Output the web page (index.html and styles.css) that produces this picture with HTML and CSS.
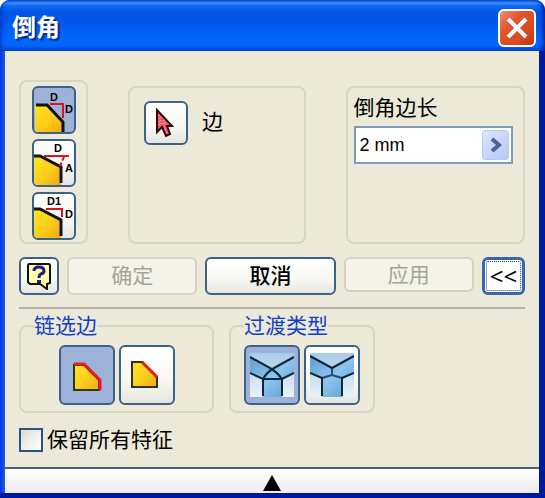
FILE: index.html
```html
<!DOCTYPE html>
<html lang="zh-CN">
<head>
    <meta charset="UTF-8">
    <meta name="viewport" content="width=device-width, initial-scale=1.0">
    <title>倒角</title>
    <link rel="stylesheet" href="styles.css">
</head>
<body>
    <div class="dialog">
        <div class="dialog-title">
            <h1>倒角</h1>
            <button class="close-button" type="button" aria-label="关闭">
                <svg width="22" height="22" viewBox="0 0 22 22"><path d="M2 2L20 20M20 2L2 20" stroke="#fff" stroke-width="4"/></svg>
            </button>
        </div>

        <form class="dialog-body">
            <div class="top-row">
                <!-- Chamfer mode -->
                <div class="group mode-group">
                    <button class="tool-button mode-button active" type="button" aria-label="距离">
                        <svg width="40" height="44" viewBox="0 0 40 44">
                            <path d="M1 17H13L29 33V44H1Z" fill="url(#gold)"/>
                            <path d="M2 17H13L29 34V44" fill="none" stroke="#111" stroke-width="3"/>
                            <path d="M16 16H29V30" fill="none" stroke="#e01020" stroke-width="2"/>
                            <text x="16" y="13">D</text>
                            <text x="31" y="25">D</text>
                        </svg>
                    </button>
                    <button class="tool-button mode-button" type="button" aria-label="距离和角度">
                        <svg width="40" height="44" viewBox="0 0 40 44">
                            <path d="M0 15H6L27 26V44H0Z" fill="url(#gold)"/>
                            <path d="M0 15H6L27 26V42" fill="none" stroke="#111" stroke-width="3"/>
                            <path d="M10 15H35" stroke="#e01020" stroke-width="2"/>
                            <path d="M30 16L26 25" stroke="#e01020" stroke-width="2" stroke-dasharray="4 2"/>
                            <text x="20" y="11">D</text>
                            <text x="31" y="31">A</text>
                        </svg>
                    </button>
                    <button class="tool-button mode-button" type="button" aria-label="两个距离">
                        <svg width="40" height="44" viewBox="0 0 40 44">
                            <path d="M0 15H6L27 26V44H0Z" fill="url(#gold)"/>
                            <path d="M0 15H6L27 26V42" fill="none" stroke="#111" stroke-width="3"/>
                            <path d="M12 15H28V23" fill="none" stroke="#e01020" stroke-width="2"/>
                            <text x="13" y="11">D1</text>
                            <text x="31" y="24">D</text>
                        </svg>
                    </button>
                </div>

                <div class="group edge-group">
                    <button class="tool-button pick-button" type="button" id="pick-edge" aria-labelledby="edge-label">
                        <svg width="28" height="30" viewBox="0 0 28 30">
                            <path d="M5 2V24L10 19L14 28L18 26L15 18H20Z" fill="#ef5a64" stroke="#2c0a0c" stroke-width="2"/>
                            <path d="M7 7V18M9 9V17M12 12V17M14 14V16M13 21L15 25" stroke="#fbb" stroke-width="1" stroke-dasharray="1 2"/>
                        </svg>
                    </button>
                    <span id="edge-label">边</span>
                </div>

                <div class="group size-group">
                    <label for="distance">倒角边长</label>
                    <div class="value-box">
                        <input type="text" id="distance" value="2 mm">
                        <button class="value-more" type="button" aria-label="更多">
                            <svg width="12" height="16" viewBox="0 0 12 16"><path d="M2 2L9 8L2 14" fill="none" stroke="#49639c" stroke-width="4"/></svg>
                        </button>
                    </div>
                </div>
            </div>

            <div class="action-row">
                <button class="push-button help-button" type="button" aria-label="帮助">
                    <svg width="26" height="28" viewBox="0 0 26 28">
                        <path d="M3 2H23L24 3V21L21 22V27L14 22H4L2 20V3Z" fill="#ffffb0" stroke="#111" stroke-width="2"/>
                        <path d="M8 9Q8 5 13 5Q18 5 18 9Q18 11 15 12Q13 13 13 16" fill="none" stroke="#20207c" stroke-width="3"/>
                        <path d="M11 18H15V21H11Z" fill="#20207c"/>
                    </svg>
                </button>
                <button class="push-button wide" type="button" disabled>确定</button>
                <button class="push-button wide cancel-button" type="button">取消</button>
                <button class="push-button wide apply-button" type="button" disabled>应用</button>
                <button class="push-button less-button" type="button">&lt;&lt;</button>
            </div>

            <hr>

            <div class="option-row">
                <fieldset class="chain-group">
                    <legend>链选边</legend>
                    <div class="option-buttons">
                        <button class="tool-button option-button active" type="button" aria-label="所有相切连接边">
                            <svg width="42" height="42" viewBox="0 0 42 42">
                                <path d="M8 11H18L33 26V36H8Z" fill="url(#gold)" stroke="#33330a" stroke-width="2"/>
                                <path d="M8 10H18L34 26V36" fill="none" stroke="#e81c24" stroke-width="3"/>
                            </svg>
                        </button>
                        <button class="tool-button option-button" type="button" aria-label="单边">
                            <svg width="42" height="42" viewBox="0 0 42 42">
                                <path d="M6 8H16L31 23V33H6Z" fill="url(#gold)" stroke="#33330a" stroke-width="2"/>
                                <path d="M16 8L31 23" stroke="#e81c24" stroke-width="3"/>
                            </svg>
                        </button>
                    </div>
                </fieldset>
                <fieldset class="setback-group">
                    <legend>过渡类型</legend>
                    <div class="option-buttons">
                        <button class="tool-button option-button active" type="button" aria-label="过渡">
                            <svg width="44" height="44" viewBox="0 0 44 44">
                                <path d="M0 0H44V44H0Z" fill="url(#ice)"/>
                                <path d="M0 4L22 16L44 4V20L32 26V44H13V26L0 20Z" fill="url(#sky)"/>
                                <path d="M0 4L20 15Q27 19 32 26L44 20M44 4L24 15Q17 19 13 26L0 20M12 26H33M13 26V43M32 26V43" fill="none" stroke="#102638" stroke-width="2"/>
                            </svg>
                        </button>
                        <button class="tool-button option-button" type="button" aria-label="无过渡">
                            <svg width="44" height="44" viewBox="0 0 44 44">
                                <path d="M0 0H44V44H0Z" fill="url(#ice)"/>
                                <path d="M0 3L22 15L44 3V20L32 25V44H12V25L0 20Z" fill="url(#sky)"/>
                                <path d="M22 15V22L12 25M22 22L32 25" fill="none" stroke="#28506e" stroke-width="2"/>
                                <path d="M0 3L22 15L44 3M0 20L12 25V43M44 20L32 25V43" fill="none" stroke="#102638" stroke-width="2"/>
                            </svg>
                        </button>
                    </div>
                </fieldset>
            </div>

            <div class="keep-row">
                <input type="checkbox" id="keep-features">
                <label for="keep-features">保留所有特征</label>
            </div>
        </form>

        <button class="collapse-bar" type="button" aria-label="收起">
            <svg width="18" height="16" viewBox="0 0 18 16"><path d="M9 0L18 16H0Z" fill="#000"/></svg>
        </button>
    </div>

    <!-- Shared gradients -->
    <svg class="defs" width="0" height="0" aria-hidden="true">
        <defs>
            <linearGradient id="gold" x1="0" y1="0" x2="1" y2="1">
                <stop offset="0" stop-color="#ffe61e"/>
                <stop offset="0.5" stop-color="#fccf1c"/>
                <stop offset="1" stop-color="#f0a812"/>
            </linearGradient>
            <linearGradient id="sky" x1="0" y1="0" x2="1" y2="1">
                <stop offset="0" stop-color="#5f9fd0"/>
                <stop offset="0.5" stop-color="#8cc4ee"/>
                <stop offset="1" stop-color="#5a9bd0"/>
            </linearGradient>
            <linearGradient id="ice" x1="0" y1="0" x2="0" y2="1">
                <stop offset="0" stop-color="#a8cbea"/>
                <stop offset="1" stop-color="#e9f3fa"/>
            </linearGradient>
        </defs>
    </svg>
</body>
</html>
```
FILE: styles.css
```css
* {
    box-sizing: border-box;
}

body {
    margin: 0;
    background: #fff;
    color: #000;
    font-family: "Liberation Sans", "Noto Sans CJK SC", sans-serif;
    font-size: 21px;
    line-height: 26px;
}

button,
input {
    margin: 0;
    padding: 0;
    font: inherit;
    color: inherit;
}

svg {
    display: block;
}

.defs {
    position: absolute;
}

/* Window frame */
.dialog {
    display: flex;
    flex-direction: column;
    min-height: 100vh;
    padding: 0 6px 5px 5px;
    border-radius: 10px 10px 0 0;
    background: linear-gradient(to right, #0831d9 0, #1660ee 5px, #0018a0 6px);
    box-shadow: inset 0 -5px 0 #0018a0;
}

.dialog-title {
    display: flex;
    align-items: center;
    justify-content: space-between;
    height: 51px;
    margin: 0 -6px 0 -5px;
    padding: 4px 9px 0 12px;
    border-radius: 10px 10px 0 0;
    background: linear-gradient(to bottom, #0050d0 0, #3c90ff 3px, #1068f0 6px, #0054e4 12px, #0058ec 24px, #0066ff 38px, #0066ff 45px, #0048d0 51px);
    box-shadow: inset -4px 0 4px -2px #001c9c, inset 3px 0 4px -2px #0030b8;
}

.dialog-title h1 {
    margin: 0;
    color: #fff;
    font-size: 24px;
    line-height: 32px;
    font-weight: bold;
    text-shadow: 2px 2px 1px #0a2a8c;
}

.close-button {
    display: flex;
    align-items: center;
    justify-content: center;
    width: 38px;
    height: 38px;
    border: 2px solid #fff;
    border-radius: 6px;
    background: linear-gradient(135deg, #ee9078 0, #e0552e 35%, #d84a20 70%, #b83810 100%);
}

.dialog-body {
    flex: 1;
    padding: 29px 14px 12px;
    background: #ece9d8;
}

/* Groups */
.group,
fieldset {
    margin: 0;
    border: 2px solid #d5d5c2;
    border-radius: 8px;
}

.top-row {
    display: grid;
    grid-template-columns: 69px minmax(0, 178fr) minmax(0, 180fr);
    column-gap: 40px;
    align-items: end;
}

.mode-group {
    display: flex;
    flex-direction: column;
    align-items: center;
    gap: 5px;
    padding: 4px 0 2px;
}

.edge-group,
.size-group {
    height: 158px;
}

.edge-group {
    display: flex;
    align-items: flex-start;
    gap: 14px;
    padding: 13px 14px;
}

.edge-group span {
    padding-top: 8px;
}

.size-group {
    padding: 5px 10px 0 6px;
}

.size-group label {
    display: block;
    margin-bottom: 3px;
    line-height: 30px;
}

/* Buttons */
.tool-button,
.push-button {
    display: flex;
    align-items: center;
    justify-content: center;
    border: 2px solid #3d6287;
    border-radius: 6px;
    background: linear-gradient(to bottom, #fff, #f7f7f3 60%, #e6e6df);
}

.tool-button.active {
    background: #9cb2d8;
}

.mode-button {
    width: 44px;
    height: 48px;
    overflow: hidden;
}

.mode-button text {
    font-family: "Liberation Sans", sans-serif;
    font-size: 11px;
    font-weight: bold;
}

.pick-button {
    width: 44px;
    height: 44px;
}

.option-button {
    width: 56px;
    height: 60px;
}

.value-box {
    display: flex;
    height: 38px;
    padding: 2px;
    border: 2px solid #7f9db9;
    background: #fff;
}

.value-box input {
    flex: 1;
    width: 100%;
    min-width: 0;
    padding-left: 2px;
    border: 0;
    outline: 0;
    background: #fff;
    font-size: 18px;
}

.value-more {
    display: flex;
    flex: none;
    align-items: center;
    justify-content: center;
    width: 27px;
    border: 1px solid #b6c8f4;
    border-radius: 3px;
    background: linear-gradient(135deg, #dce6fe, #b4c8f6);
}

.action-row {
    display: flex;
    gap: 8px;
    margin-top: 13px;
}

.push-button {
    height: 38px;
}

.push-button:disabled {
    border-color: #d3d2c0;
    background: #f4f3e9;
    color: #a5a595;
}

.wide {
    flex: 1;
}

.help-button {
    width: 40px;
}

.cancel-button {
    font-weight: 500;
}

.apply-button {
    height: 35px;
}

.less-button {
    width: 43px;
    outline: 1px dotted #2c3c9c;
    outline-offset: -5px;
    border: 3px solid #3a66ac;
    background: #fff;
    font-family: "Noto Sans", sans-serif;
    font-size: 24px;
}

hr {
    height: 2px;
    margin: 12px 0 0;
    border: 0;
    background: #b3b2a4;
}

/* Expanded options */
.option-row {
    display: flex;
    gap: 15px;
    margin-top: 4px;
}

fieldset {
    min-width: 0;
    padding: 6px 13px;
}

legend {
    padding: 0;
    color: #1140cc;
}

.chain-group {
    width: 195px;
}

.option-buttons {
    display: flex;
    justify-content: center;
    gap: 4px;
}

.keep-row {
    display: flex;
    align-items: center;
    gap: 4px;
    margin-top: 14px;
}

.keep-row input {
    appearance: none;
    width: 24px;
    height: 24px;
    border: 2px solid #285480;
    background: linear-gradient(135deg, #dcdcd6, #fff);
}

.collapse-bar {
    display: flex;
    align-items: center;
    justify-content: center;
    height: 26px;
    padding-top: 4px;
    border: 0;
    border-top: 2px solid #47647e;
    background: linear-gradient(to bottom, #fff, #ecebee);
}
```
